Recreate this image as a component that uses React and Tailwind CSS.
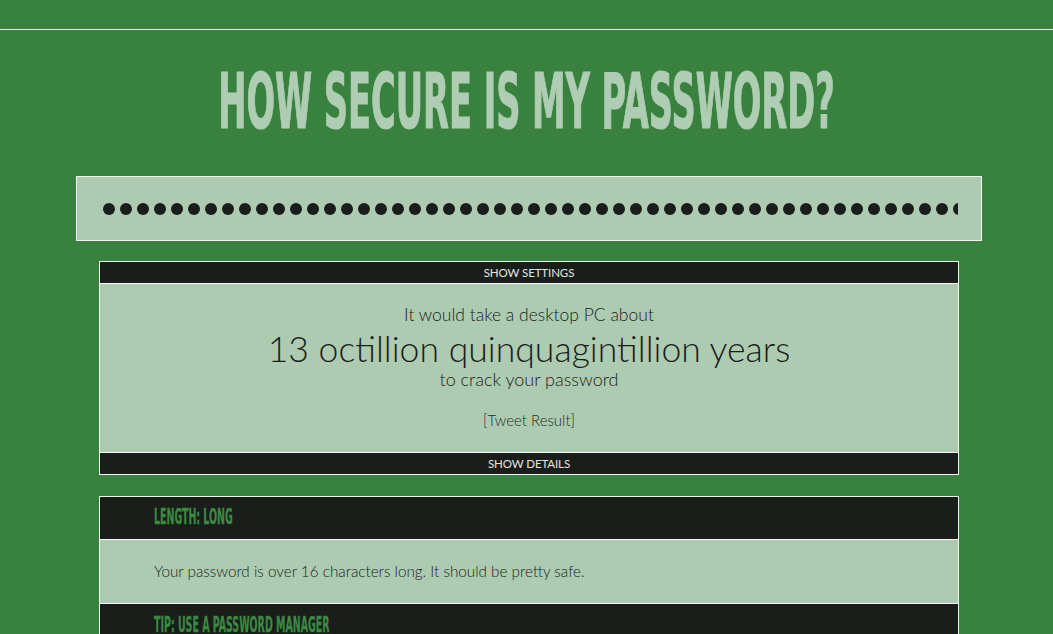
import React from "react";

const Dots = () => (
  <div className="flex gap-[5px] overflow-hidden w-full">
    {Array.from({ length: 60 }).map((_, i) => (
      <div key={i} className="w-[12px] h-[12px] rounded-full bg-[#1a1e1b] shrink-0" />
    ))}
  </div>
);

const condensed = { fontFamily: "'DejaVu Sans Condensed', 'DejaVu Sans', sans-serif" };

const DetailHead = ({ children, border }) => (
  <div className={`h-[43px] bg-[#1a1e1b] flex items-center pl-[54px] ${border ? "border-b border-[#f2f5f2]" : ""}`}>
    <span
      className="text-[21px] font-bold text-[#3a8a42] inline-block scale-x-[0.5] origin-left whitespace-nowrap [-webkit-text-stroke:0.3px_#3a8a42]"
      style={condensed}
    >
      {children}
    </span>
  </div>
);

export default function App() {
  const lato = { fontFamily: "Lato, 'Open Sans', sans-serif" };
  return (
    <div className="min-h-[634px] w-full bg-[#39813f] overflow-hidden" style={lato}>
      <div className="h-[29px]" />
      <div className="h-px bg-[#e4ece4]" />
      <div className="mt-[34px] h-[76px] flex justify-center">
        <h1
          className="text-[76px] leading-[76px] font-bold text-[#aecdb2] whitespace-nowrap inline-block scale-x-[0.492] origin-center [-webkit-text-stroke:1.2px_#aecdb2]"
          style={condensed}
        >
          HOW SECURE IS MY PASSWORD?
        </h1>
      </div>
      <div className="mt-[36px] ml-[76px] w-[906px] h-[65px] border border-[#f2f5f2] bg-[#adcbb1] flex items-center pl-[26px] pr-[23px]">
        <Dots />
      </div>
      <div className="mt-[20px] ml-[99px] w-[860px] border border-[#f2f5f2]">
        <div className="h-[21px] bg-[#1a1e1b] text-[#e2e6e2] text-[11.5px] tracking-[-0.1px] flex items-center justify-center">
          SHOW SETTINGS
        </div>
        <div className="h-[170px] border-t border-b border-[#f2f5f2] bg-[#adcbb1] text-[#1a1e1b] flex flex-col items-center font-light">
          <div className="mt-[20px] text-[17.5px] leading-[22px]">It would take a desktop PC about</div>
          <div className="mt-[3px] text-[35.6px] leading-[40px]">13 octillion quinquagintillion years</div>
          <div className="mt-[-1px] text-[18px] leading-[22px]">to crack your password</div>
          <div className="mt-[21px] text-[15px] leading-[18px] text-[#1f2f24]">[Tweet Result]</div>
        </div>
        <div className="h-[21px] bg-[#1a1e1b] text-[#e2e6e2] text-[11.5px] tracking-[-0.1px] flex items-center justify-center">
          SHOW DETAILS
        </div>
      </div>
      <div className="mt-[21px] ml-[99px] w-[860px] border border-[#f2f5f2]">
        <DetailHead border>LENGTH: LONG</DetailHead>
        <div className="h-[64px] bg-[#adcbb1] flex items-center pl-[54px] border-b border-[#f2f5f2] text-[15.25px] text-[#1a1e1b] font-light">
          Your password is over 16 characters long. It should be pretty safe.
        </div>
        <DetailHead>TIP: USE A PASSWORD MANAGER</DetailHead>
      </div>
    </div>
  );
}
